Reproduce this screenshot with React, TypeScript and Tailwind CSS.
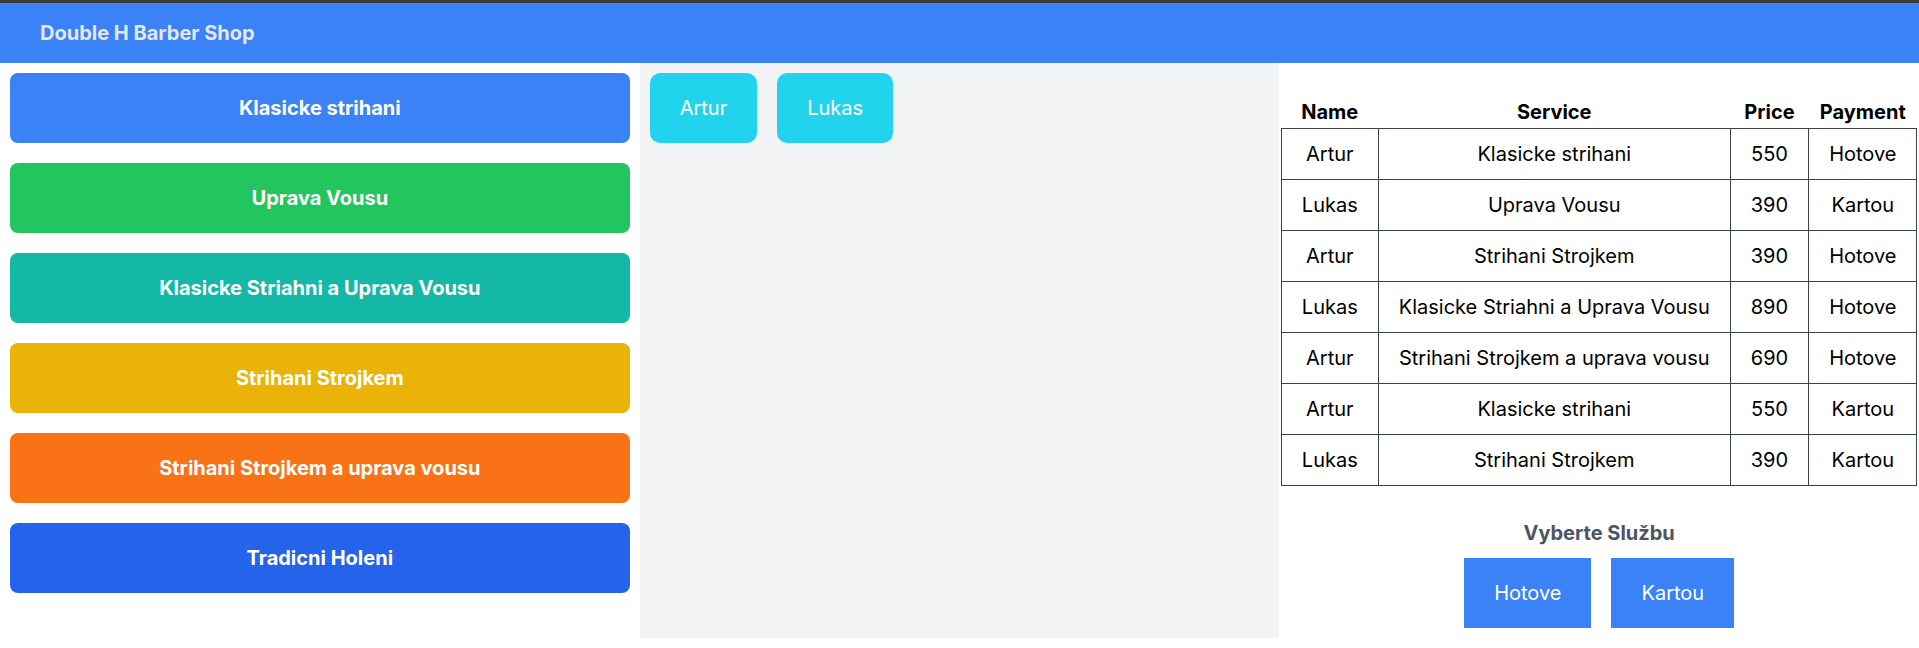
import React from "react";

const services = [
  { name: "Klasicke strihani", color: "bg-[#3b82f6]" },
  { name: "Uprava Vousu", color: "bg-[#22c55e]" },
  { name: "Klasicke Striahni a Uprava Vousu", color: "bg-[#14b8a6]" },
  { name: "Strihani Strojkem", color: "bg-[#eab308]" },
  { name: "Strihani Strojkem a uprava vousu", color: "bg-[#f97316]" },
  { name: "Tradicni Holeni", color: "bg-[#2563eb]" },
];

const barbers = ["Artur", "Lukas"];

const payments = ["Hotove", "Kartou"];

const columns = ["Name", "Service", "Price", "Payment"];

const orders = [
  ["Artur", "Klasicke strihani", "550", "Hotove"],
  ["Lukas", "Uprava Vousu", "390", "Kartou"],
  ["Artur", "Strihani Strojkem", "390", "Hotove"],
  ["Lukas", "Klasicke Striahni a Uprava Vousu", "890", "Hotove"],
  ["Artur", "Strihani Strojkem a uprava vousu", "690", "Hotove"],
  ["Artur", "Klasicke strihani", "550", "Kartou"],
  ["Lukas", "Strihani Strojkem", "390", "Kartou"],
];

export default function App() {
  return (
    <div className="bg-white font-['Inter',sans-serif] text-[20px] leading-[30px] text-black">
      <header className="border-t-3 border-[#3a3a3a] bg-[#3b82f6] px-10 py-[15px]">
        <h1 className="font-bold text-[#e5e7eb]">Double H Barber Shop</h1>
      </header>
      <main className="grid grid-cols-3">
        <section className="flex flex-col gap-5 p-2.5">
          {services.map((s) => (
            <button key={s.name} type="button" className={`rounded-lg px-[30px] py-5 font-bold text-white ${s.color}`}>
              {s.name}
            </button>
          ))}
        </section>
        <section className="flex items-start gap-5 bg-[#f3f4f6] p-2.5">
          {barbers.map((b) => (
            <button key={b} type="button" className="rounded-[10px] bg-[#22d3ee] px-[30px] py-5 text-white">
              {b}
            </button>
          ))}
        </section>
        <section className="flex flex-col items-center pt-[33px] pb-2.5">
          <table className="border-collapse text-center">
            <thead>
              <tr>
                {columns.map((c) => (
                  <th key={c} scope="col" className="p-px font-bold">
                    {c}
                  </th>
                ))}
              </tr>
            </thead>
            <tbody>
              {orders.map((row, i) => (
                <tr key={i}>
                  {row.map((cell, j) => (
                    <td key={j} className="border border-[#374151] px-5 py-2.5">
                      {cell}
                    </td>
                  ))}
                </tr>
              ))}
            </tbody>
          </table>
          <h2 className="mt-8 mb-2.5 font-bold text-[#4b5563]">Vyberte Službu</h2>
          <div className="flex gap-5">
            {payments.map((p) => (
              <button key={p} type="button" className="bg-[#3b82f6] px-[30px] py-5 text-white">
                {p}
              </button>
            ))}
          </div>
        </section>
      </main>
    </div>
  );
}
